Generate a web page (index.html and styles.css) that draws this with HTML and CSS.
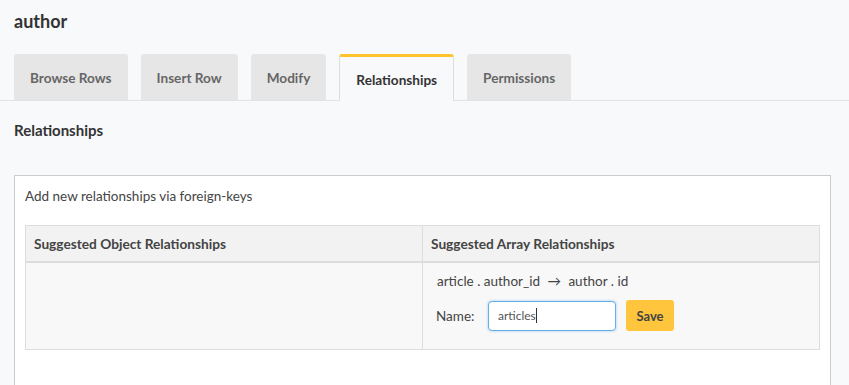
FILE: index.html
```html
<!DOCTYPE html>
<html>
<head>
<meta charset="utf-8">
<link rel="stylesheet" href="styles.css">
</head>
<body>
<div class="page">
  <h1 class="title">author</h1>
  <div class="tabs">
    <div class="tab">Browse Rows</div>
    <div class="tab">Insert Row</div>
    <div class="tab">Modify</div>
    <div class="tab active">Relationships</div>
    <div class="tab">Permissions</div>
  </div>
  <h2 class="section">Relationships</h2>
  <div class="box">
    <div class="box-title">Add new relationships via foreign-keys</div>
    <table class="rel">
      <thead>
        <tr><th class="c1">Suggested Object Relationships</th><th>Suggested Array Relationships</th></tr>
      </thead>
      <tbody>
        <tr>
          <td class="c1"></td>
          <td>
            <div class="fk">article . author_id <span class="arrow">&rarr;</span> author . id</div>
            <div class="form">
              <span class="lbl">Name:</span>
              <div class="input">articles<span class="caret"></span></div>
              <button class="save">Save</button>
            </div>
          </td>
        </tr>
      </tbody>
    </table>
  </div>
</div>
</body>
</html>
```
FILE: styles.css
```css
html, body {
  margin: 0;
  padding: 0;
  background: #f8f9fb;
  font-family: Lato, "Liberation Sans", sans-serif;
  color: #333;
}
.page {
  height: 385px;
  overflow: hidden;
}
.title {
  margin: 0;
  padding: 10px 14px 0;
  font-size: 18px;
  line-height: 22px;
  font-weight: bold;
  color: #333;
}
.tabs {
  display: flex;
  gap: 13px;
  margin-top: 22px;
  padding-left: 14px;
  border-bottom: 1px solid #e3e4e6;
  height: 46px;
}
.tab {
  background: #e6e6e6;
  border-radius: 3px 3px 0 0;
  padding: 2px 16px 0;
  height: 46px;
  display: flex;
  align-items: center;
  font-size: 13.6px;
  font-weight: bold;
  color: #666;
  box-sizing: border-box;
}
.tab.active {
  background: #f8f9fb;
  border: 1px solid #ddd;
  border-top: 3px solid #fec32d;
  border-bottom: none;
  height: 47px;
  color: #333;
  padding: 1px 16px 0;
}
.section {
  margin: 0;
  padding: 20px 14px 0;
  font-size: 15px;
  line-height: 18px;
  font-weight: bold;
  color: #333;
}
.box {
  margin: 36px 18px 0 14px;
  background: #fff;
  border: 1px solid #ccc;
  padding: 10px 10px 40px;
}
.box-title {
  font-size: 13.5px;
  line-height: 20px;
  color: #444;
}
.rel {
  margin-top: 19px;
  width: 100%;
  border-collapse: collapse;
  table-layout: fixed;
  font-size: 13.5px;
}
.rel th {
  background: #f2f2f2;
  border: 1px solid #ddd;
  border-bottom: 2px solid #ddd;
  text-align: left;
  padding: 0 8px;
  height: 35px;
  font-size: 13.7px;
  font-weight: bold;
  color: #444;
}
.rel th.c1 { width: 380px; }
.rel td {
  background: #f8f8f8;
  border: 1px solid #ddd;
  vertical-align: top;
  padding: 8px 13px 18px 13px;
  color: #444;
}
.fk {
  line-height: 20px;
  padding-left: 1px;
}
.arrow {
  margin: 0 4px;
}
.form {
  display: flex;
  align-items: center;
  margin-top: 9px;
}
.lbl {
  width: 52px;
}
.input {
  width: 128px;
  height: 30px;
  box-sizing: border-box;
  border: 1px solid #66afe9;
  border-radius: 4px;
  background: #fff;
  box-shadow: 0 0 3px rgba(102,175,233,0.6);
  font-size: 12px;
  padding-left: 9px;
  display: flex;
  align-items: center;
  color: #555;
}
.caret {
  display: inline-block;
  width: 1px;
  height: 15px;
  background: #333;
}
.save {
  margin-left: 10px;
  width: 48px;
  height: 31px;
  border: none;
  border-radius: 3px;
  background: #fec53d;
  font-family: inherit;
  font-size: 13px;
  font-weight: bold;
  color: #444;
  padding: 0;
}
```
